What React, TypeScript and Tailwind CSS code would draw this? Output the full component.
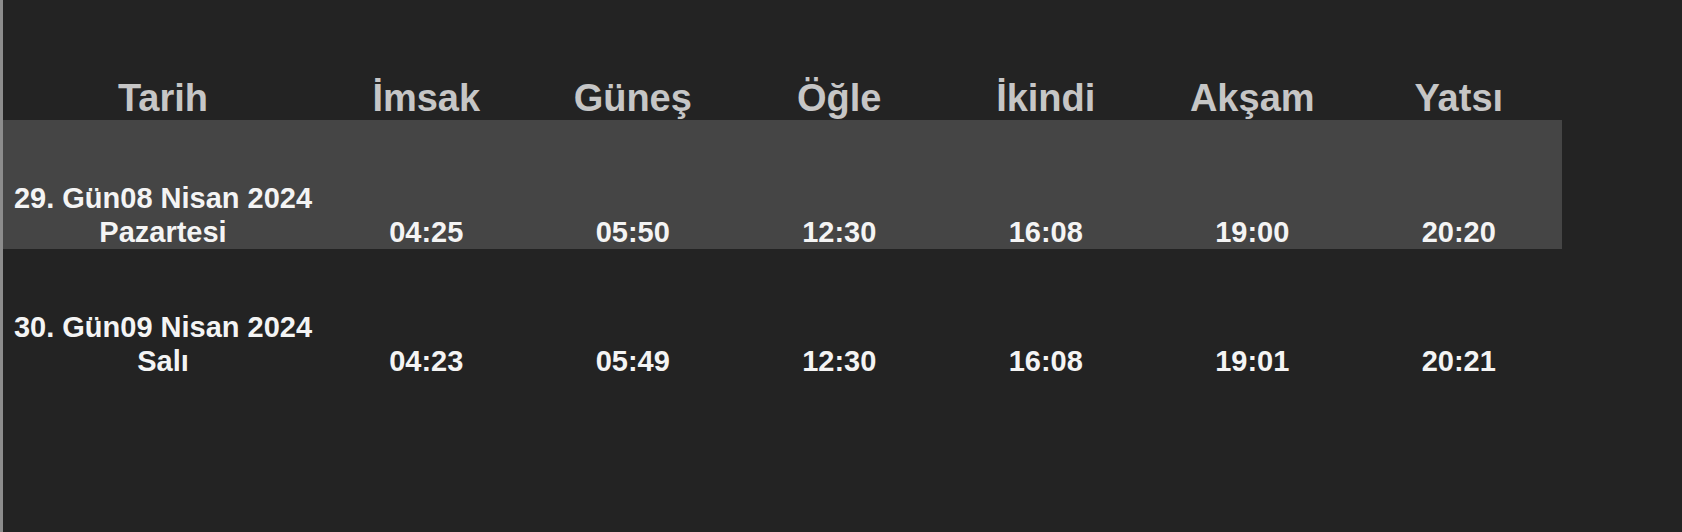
import React from 'react';

interface DayRow {
  day: string;
  date: string;
  weekday: string;
  times: string[];
}

const headers = ['Tarih', 'İmsak', 'Güneş', 'Öğle', 'İkindi', 'Akşam', 'Yatsı'];

const rows: DayRow[] = [
  {
    day: '29. Gün',
    date: '08 Nisan 2024',
    weekday: 'Pazartesi',
    times: ['04:25', '05:50', '12:30', '16:08', '19:00', '20:20'],
  },
  {
    day: '30. Gün',
    date: '09 Nisan 2024',
    weekday: 'Salı',
    times: ['04:23', '05:49', '12:30', '16:08', '19:01', '20:21'],
  },
];

const App: React.FC = () => {
  return (
    <div
      className="min-h-[532px] w-full bg-[#232323] border-l-[3px] border-[#8c8c8c]"
      style={{ fontFamily: '"Liberation Sans", Arial, sans-serif' }}
    >
      <div className="w-[1559px] pt-[77px]">
        {/* header */}
        <div className="grid grid-cols-[320px_repeat(6,minmax(0,1fr))] text-center text-[38px] leading-[43px] font-bold text-[#c6c6c6]">
          {headers.map((h) => (
            <div key={h}>{h}</div>
          ))}
        </div>

        {rows.map((row, i) => (
          <div
            key={row.day}
            className={`grid grid-cols-[320px_repeat(6,minmax(0,1fr))] h-[129px] items-end text-center text-[29px] leading-[34px] font-bold text-[#f4f4f4] ${
              i === 0 ? 'bg-[#454545]' : ''
            }`}
          >
            <div className="whitespace-nowrap">
              <div>
                {row.day}
                {row.date}
              </div>
              <div>{row.weekday}</div>
            </div>
            {row.times.map((t, j) => (
              <div key={j}>{t}</div>
            ))}
          </div>
        ))}
      </div>
    </div>
  );
};

export default App;
